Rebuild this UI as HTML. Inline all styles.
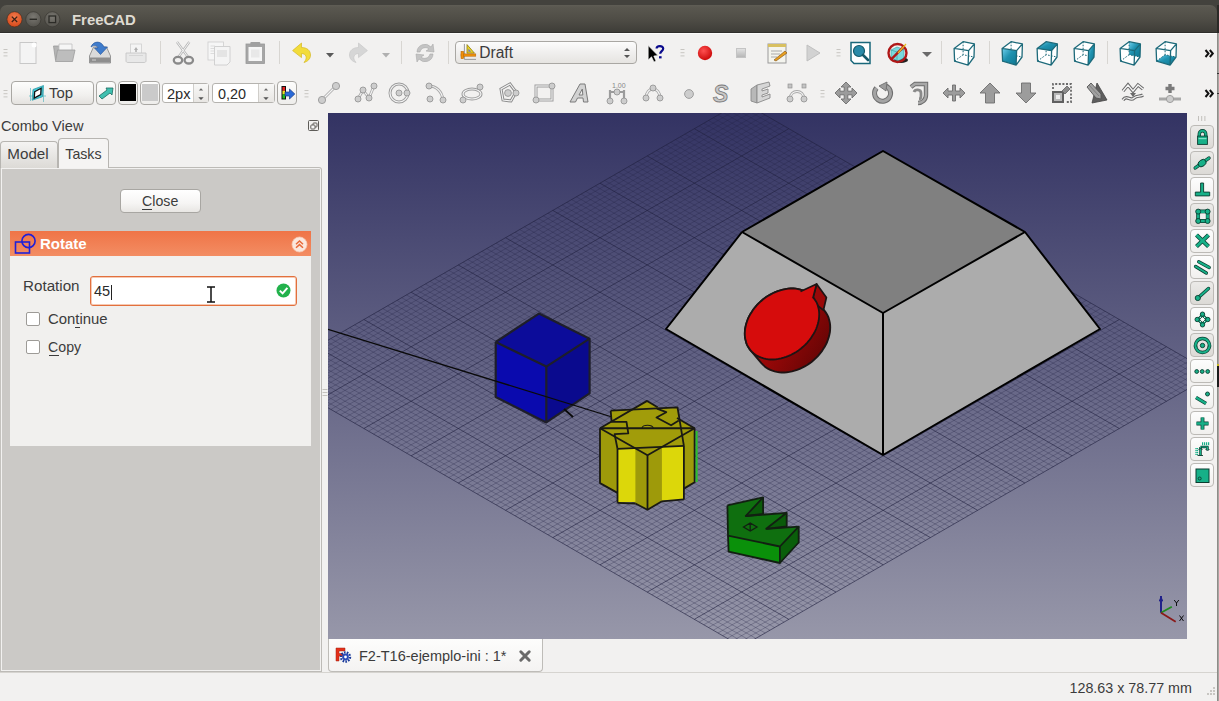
<!DOCTYPE html><html><head><meta charset="utf-8"><style>html,body{margin:0;padding:0;}svg{overflow:visible}body{width:1219px;height:701px;overflow:hidden;position:relative;background:#f2f1f0;font-family:"Liberation Sans", sans-serif;}</style></head><body>
<div style="position:absolute;left:0px;top:0px;width:1219px;height:33px;background:#43423d"></div>
<div style="position:absolute;left:0px;top:5px;width:1217px;height:28px;background:linear-gradient(#5f5d55 0px,#5a5850 2px,#4f4d46 14px,#3e3d38 27px,#2f2e2b 27px);border-radius:7px 7px 0 0"></div>
<div style="position:absolute;left:0px;top:33px;width:1219px;height:1px;background:#fbfbfa"></div>
<svg style="position:absolute;left:5px;top:10px;" width="58" height="20" viewBox="0 0 58 20">
<defs><radialGradient id="cl" cx="50%" cy="35%" r="65%"><stop offset="0" stop-color="#f47a4c"/><stop offset="1" stop-color="#d44a1b"/></radialGradient>
<radialGradient id="gb" cx="50%" cy="35%" r="65%"><stop offset="0" stop-color="#7a7872"/><stop offset="1" stop-color="#55534d"/></radialGradient></defs>
<circle cx="9.5" cy="9.3" r="7.6" fill="url(#cl)" stroke="#3a2a20" stroke-width="0.6"/>
<path d="M6.8 6.6 L12.2 12 M12.2 6.6 L6.8 12" stroke="#3b2116" stroke-width="1.3"/>
<circle cx="28.3" cy="9.3" r="7.6" fill="url(#gb)" stroke="#35342f" stroke-width="0.6"/>
<path d="M24.6 9.3 H32" stroke="#2c2b27" stroke-width="1.4"/>
<circle cx="47.3" cy="9.3" r="7.6" fill="url(#gb)" stroke="#35342f" stroke-width="0.6"/>
<rect x="44" y="6" width="6.6" height="6.6" fill="none" stroke="#2c2b27" stroke-width="1.3"/>
</svg>
<div style="position:absolute;left:72.0px;top:11.8px;font-size:14.9px;font-weight:bold;color:#dfdbd2;line-height:normal;white-space:pre;">FreeCAD</div>
<div style="position:absolute;left:1.0px;top:117.8px;font-size:14.6px;font-weight:normal;color:#3c3c3c;line-height:normal;white-space:pre;">Combo View</div>
<svg style="position:absolute;left:307px;top:119px;" width="12" height="12" viewBox="0 0 12 12"><rect x="1.5" y="1.5" width="10" height="10" rx="1" fill="none" stroke="#5e5c58" stroke-width="1"/><rect x="6" y="4" width="4" height="4" rx="0.8" fill="none" stroke="#5e5c58" stroke-width="1"/><rect x="3.8" y="6" width="4.2" height="4" rx="0.8" fill="#f6f6f6" stroke="#5e5c58" stroke-width="1"/></svg>
<div style="position:absolute;left:0px;top:167px;width:322px;height:505px;border:1px solid #bdbbb7;border-left-color:#c4c2be;box-sizing:border-box;border-radius:0 3px 0 0"></div>
<div style="position:absolute;left:2px;top:169px;width:318px;height:501px;background:#cbc9c6"></div>
<div style="position:absolute;left:0px;top:141px;width:58px;height:27px;background:linear-gradient(#f4f3f2,#dcdad6);border:1px solid #b7b5b1;border-bottom:none;border-radius:4px 4px 0 0;box-sizing:border-box"></div>
<div style="position:absolute;left:58px;top:138px;width:51px;height:30px;background:#f5f4f3;border:1px solid #b7b5b1;border-bottom:none;border-radius:4px 4px 0 0;box-sizing:border-box"></div>
<div style="position:absolute;left:7.3px;top:145.0px;font-size:15.2px;font-weight:normal;color:#3c3c3c;line-height:normal;white-space:pre;">Model</div>
<div style="position:absolute;left:65.3px;top:145.7px;font-size:14.2px;font-weight:normal;color:#3c3c3c;line-height:normal;white-space:pre;">Tasks</div>
<div style="position:absolute;left:120px;top:189px;width:81px;height:24px;background:linear-gradient(#ffffff,#f6f5f4 60%,#e8e6e3);border:1px solid #a8a6a2;border-radius:4px;box-sizing:border-box"></div>
<div style="position:absolute;left:142.0px;top:193.1px;font-size:14.2px;font-weight:normal;color:#3c3c3c;line-height:normal;white-space:pre;">Close</div>
<div style="position:absolute;left:142px;top:209px;width:10px;height:1px;background:#3c3c3c"></div>
<div style="position:absolute;left:10px;top:231px;width:301px;height:25px;background:linear-gradient(#ef7447,#f38d63)"></div>
<svg style="position:absolute;left:13px;top:233px;" width="22" height="22" viewBox="0 0 22 22"><rect x="2.5" y="9" width="14" height="11" fill="none" stroke="#2020d8" stroke-width="1.6"/><circle cx="15.5" cy="8" r="6.6" fill="none" stroke="#2020d8" stroke-width="1.6"/></svg>
<div style="position:absolute;left:40.0px;top:235.4px;font-size:15.0px;font-weight:bold;color:#ffffff;line-height:normal;white-space:pre;">Rotate</div>
<svg style="position:absolute;left:291px;top:236px;" width="17" height="17" viewBox="0 0 17 17"><circle cx="8.5" cy="8.5" r="7.5" fill="#fbe7dd" stroke="#f6c7b0" stroke-width="0.8"/><path d="M5 8.2 L8.5 5 L12 8.2 M5 11.8 L8.5 8.6 L12 11.8" fill="none" stroke="#e86a3a" stroke-width="1.5"/></svg>
<div style="position:absolute;left:10px;top:256px;width:301px;height:190px;background:#f1f0ee"></div>
<div style="position:absolute;left:23.0px;top:277.2px;font-size:15.2px;font-weight:normal;color:#3c3c3c;line-height:normal;white-space:pre;">Rotation</div>
<div style="position:absolute;left:90px;top:276px;width:207px;height:30px;background:#fff;border:1px solid #e2703d;border-radius:3px;box-sizing:border-box;box-shadow:inset 0 0 0 1px #f6c9b3"></div>
<div style="position:absolute;left:94.0px;top:283.4px;font-size:14.5px;font-weight:normal;color:#2a2a2a;line-height:normal;white-space:pre;">45</div>
<div style="position:absolute;left:111px;top:285px;width:1px;height:15px;background:#222"></div>
<svg style="position:absolute;left:205px;top:286px;" width="12" height="18" viewBox="0 0 12 18"><path d="M2 1 H10 M6 1 V16 M2 16 H10" stroke="#111" stroke-width="1.5" fill="none"/></svg>
<svg style="position:absolute;left:275px;top:282px;" width="17" height="17" viewBox="0 0 17 17"><circle cx="8.5" cy="8.5" r="7" fill="#22b24c"/><path d="M4.8 8.6 L7.6 11.4 L12.4 5.8" stroke="#fff" stroke-width="2" fill="none"/></svg>
<div style="position:absolute;left:26px;top:312px;width:14px;height:14px;background:#fff;border:1px solid #9d9b97;border-radius:2px;box-sizing:border-box"></div>
<div style="position:absolute;left:26px;top:340px;width:14px;height:14px;background:#fff;border:1px solid #9d9b97;border-radius:2px;box-sizing:border-box"></div>
<div style="position:absolute;left:48.0px;top:310.5px;font-size:14.9px;font-weight:normal;color:#3c3c3c;line-height:normal;white-space:pre;">Continue</div>
<div style="position:absolute;left:75px;top:327px;width:5px;height:1px;background:#3c3c3c"></div>
<div style="position:absolute;left:48.0px;top:339.1px;font-size:14.2px;font-weight:normal;color:#3c3c3c;line-height:normal;white-space:pre;">Copy</div>
<div style="position:absolute;left:49px;top:355px;width:10px;height:1px;background:#3c3c3c"></div>
<div style="position:absolute;left:322px;top:113px;width:6px;height:558px;background:#f2f1f0"></div>
<svg style="position:absolute;left:322px;top:388px" width="6" height="9"><path d="M0.5 1.5H5.5M0.5 4.5H5.5M0.5 7.5H5.5" stroke="#c4c2be" stroke-width="1"/></svg>
<svg style="position:absolute;left:328px;top:113px;overflow:hidden" width="859" height="526" viewBox="328 113 859 526"><defs><linearGradient id="bg" x1="0" y1="0" x2="0" y2="1"><stop offset="0" stop-color="#333363"/><stop offset="1" stop-color="#9797a9"/></linearGradient><radialGradient id="cyl" cx="20%" cy="20%" r="90%"><stop offset="0" stop-color="#d40c0c"/><stop offset="0.6" stop-color="#a00808"/><stop offset="1" stop-color="#6a0505"/></radialGradient></defs><rect x="328" y="113" width="859" height="526" fill="url(#bg)"/><path d="M274.2 371.3L746.3 643.9M274.2 376.7L746.3 104.1M278.9 368.5L751.0 641.1M278.9 379.5L751.0 106.9M283.7 365.8L755.8 638.4M283.7 382.2L755.8 109.6M288.4 363.1L760.5 635.7M288.4 384.9L760.5 112.3M293.1 360.4L765.2 633.0M293.1 387.6L765.2 115.0M297.8 357.6L769.9 630.2M297.8 390.4L769.9 117.8M302.5 354.9L774.6 627.5M302.5 393.1L774.6 120.5M307.3 352.2L779.4 624.8M307.3 395.8L779.4 123.2M312.0 349.5L784.1 622.1M312.0 398.5L784.1 125.9M321.4 344.0L793.5 616.6M321.4 404.0L793.5 131.4M326.2 341.3L798.3 613.9M326.2 406.7L798.3 134.1M330.9 338.6L803.0 611.2M330.9 409.4L803.0 136.8M335.6 335.8L807.7 608.4M335.6 412.2L807.7 139.6M340.3 333.1L812.4 605.7M340.3 414.9L812.4 142.3M345.0 330.4L817.1 603.0M345.0 417.6L817.1 145.0M349.8 327.7L821.9 600.3M349.8 420.3L821.9 147.7M354.5 324.9L826.6 597.5M354.5 423.1L826.6 150.5M359.2 322.2L831.3 594.8M359.2 425.8L831.3 153.2M368.6 316.8L840.7 589.4M368.6 431.2L840.7 158.6M373.4 314.0L845.5 586.6M373.4 434.0L845.5 161.4M378.1 311.3L850.2 583.9M378.1 436.7L850.2 164.1M382.8 308.6L854.9 581.2M382.8 439.4L854.9 166.8M387.5 305.9L859.6 578.5M387.5 442.1L859.6 169.6M392.2 303.1L864.3 575.7M392.2 444.9L864.3 172.3M397.0 300.4L869.1 573.0M397.0 447.6L869.1 175.0M401.7 297.7L873.8 570.3M401.7 450.3L873.8 177.7M406.4 294.9L878.5 567.5M406.4 453.1L878.5 180.5M415.9 289.5L888.0 562.1M415.9 458.5L888.0 185.9M420.6 286.8L892.7 559.4M420.6 461.2L892.7 188.6M425.3 284.0L897.4 556.6M425.3 464.0L897.4 191.4M430.0 281.3L902.1 553.9M430.0 466.7L902.1 194.1M434.7 278.6L906.8 551.2M434.7 469.4L906.8 196.8M439.5 275.9L911.6 548.5M439.5 472.1L911.6 199.5M444.2 273.1L916.3 545.7M444.2 474.9L916.3 202.3M448.9 270.4L921.0 543.0M448.9 477.6L921.0 205.0M453.6 267.7L925.7 540.3M453.6 480.3L925.7 207.7M463.1 262.2L935.2 534.8M463.1 485.8L935.2 213.2M467.8 259.5L939.9 532.1M467.8 488.5L939.9 215.9M472.5 256.8L944.6 529.4M472.5 491.2L944.6 218.6M477.2 254.1L949.3 526.7M477.2 493.9L949.3 221.3M481.9 251.3L954.0 523.9M481.9 496.7L954.0 224.1M486.7 248.6L958.8 521.2M486.7 499.4L958.8 226.8M491.4 245.9L963.5 518.5M491.4 502.1L963.5 229.5M496.1 243.2L968.2 515.8M496.1 504.8L968.2 232.2M500.8 240.4L972.9 513.0M500.8 507.6L972.9 235.0M510.3 235.0L982.4 507.6M510.3 513.0L982.4 240.4M515.0 232.2L987.1 504.8M515.0 515.8L987.1 243.2M519.7 229.5L991.8 502.1M519.7 518.5L991.8 245.9M524.4 226.8L996.5 499.4M524.4 521.2L996.5 248.6M529.2 224.1L1001.3 496.7M529.2 523.9L1001.3 251.3M533.9 221.3L1006.0 493.9M533.9 526.7L1006.0 254.1M538.6 218.6L1010.7 491.2M538.6 529.4L1010.7 256.8M543.3 215.9L1015.4 488.5M543.3 532.1L1015.4 259.5M548.0 213.2L1020.1 485.8M548.0 534.8L1020.1 262.2M557.5 207.7L1029.6 480.3M557.5 540.3L1029.6 267.7M562.2 205.0L1034.3 477.6M562.2 543.0L1034.3 270.4M566.9 202.3L1039.0 474.9M566.9 545.7L1039.0 273.1M571.6 199.5L1043.7 472.1M571.6 548.5L1043.7 275.9M576.4 196.8L1048.5 469.4M576.4 551.2L1048.5 278.6M581.1 194.1L1053.2 466.7M581.1 553.9L1053.2 281.3M585.8 191.4L1057.9 464.0M585.8 556.6L1057.9 284.0M590.5 188.6L1062.6 461.2M590.5 559.4L1062.6 286.8M595.2 185.9L1067.3 458.5M595.2 562.1L1067.3 289.5M604.7 180.5L1076.8 453.1M604.7 567.5L1076.8 294.9M609.4 177.7L1081.5 450.3M609.4 570.3L1081.5 297.7M614.1 175.0L1086.2 447.6M614.1 573.0L1086.2 300.4M618.9 172.3L1091.0 444.9M618.9 575.7L1091.0 303.1M623.6 169.6L1095.7 442.1M623.6 578.5L1095.7 305.9M628.3 166.8L1100.4 439.4M628.3 581.2L1100.4 308.6M633.0 164.1L1105.1 436.7M633.0 583.9L1105.1 311.3M637.7 161.4L1109.8 434.0M637.7 586.6L1109.8 314.0M642.5 158.6L1114.6 431.2M642.5 589.4L1114.6 316.8M651.9 153.2L1124.0 425.8M651.9 594.8L1124.0 322.2M656.6 150.5L1128.7 423.1M656.6 597.5L1128.7 324.9M661.3 147.7L1133.4 420.3M661.3 600.3L1133.4 327.7M666.1 145.0L1138.2 417.6M666.1 603.0L1138.2 330.4M670.8 142.3L1142.9 414.9M670.8 605.7L1142.9 333.1M675.5 139.6L1147.6 412.2M675.5 608.4L1147.6 335.8M680.2 136.8L1152.3 409.4M680.2 611.2L1152.3 338.6M684.9 134.1L1157.0 406.7M684.9 613.9L1157.0 341.3M689.7 131.4L1161.8 404.0M689.7 616.6L1161.8 344.0M699.1 125.9L1171.2 398.5M699.1 622.1L1171.2 349.5M703.8 123.2L1175.9 395.8M703.8 624.8L1175.9 352.2M708.6 120.5L1180.7 393.1M708.6 627.5L1180.7 354.9M713.3 117.8L1185.4 390.4M713.3 630.2L1185.4 357.6M718.0 115.0L1190.1 387.6M718.0 633.0L1190.1 360.4M722.7 112.3L1194.8 384.9M722.7 635.7L1194.8 363.1M727.4 109.6L1199.5 382.2M727.4 638.4L1199.5 365.8M732.2 106.9L1204.3 379.5M732.2 641.1L1204.3 368.5M736.9 104.1L1209.0 376.7M736.9 643.9L1209.0 371.3" stroke="rgb(38,38,71)" stroke-opacity="0.30" stroke-width="1" fill="none"/><path d="M269.5 374.0L741.6 646.6M269.5 374.0L741.6 101.4M316.7 346.7L788.8 619.3M316.7 401.3L788.8 128.7M363.9 319.5L836.0 592.1M363.9 428.5L836.0 155.9M411.1 292.2L883.2 564.8M411.1 455.8L883.2 183.2M458.3 265.0L930.4 537.6M458.3 483.0L930.4 210.4M505.6 237.7L977.6 510.3M505.6 510.3L977.6 237.7M552.8 210.4L1024.9 483.0M552.8 537.6L1024.9 265.0M600.0 183.2L1072.1 455.8M600.0 564.8L1072.1 292.2M647.2 155.9L1119.3 428.5M647.2 592.1L1119.3 319.5M694.4 128.7L1166.5 401.3M694.4 619.3L1166.5 346.7M741.6 101.4L1213.7 374.0M741.6 646.6L1213.7 374.0" stroke="rgb(33,33,63)" stroke-opacity="0.62" stroke-width="1" fill="none"/><polygon points="538.9,313.6 589.6,338.7 546.3,366.6 495.7,342.0" fill="#0c0c9a" stroke="none" stroke-width="0" stroke-linejoin="round" /><polygon points="495.7,342.0 546.3,366.6 546.3,422.4 495.7,397.0" fill="#0a0aae" stroke="none" stroke-width="0" stroke-linejoin="round" /><polygon points="546.3,366.6 589.6,338.7 589.6,393.3 546.3,422.4" fill="#0a0a8e" stroke="none" stroke-width="0" stroke-linejoin="round" /><polyline points="495.7,342.0 538.9,313.6 589.6,338.7 589.6,393.3 546.3,422.4 495.7,397.0 495.7,342.0" fill="none" stroke="#1e1e2a" stroke-width="2.2" stroke-linejoin="round"/><polyline points="495.7,342.0 546.3,366.6 589.6,338.7" fill="none" stroke="#1e1e2a" stroke-width="2.2" stroke-linejoin="round"/><polyline points="546.3,366.6 546.3,422.4" fill="none" stroke="#1e1e2a" stroke-width="2.2" stroke-linejoin="round"/><path d="M328 329.3 L612 417" stroke="#0a0a0a" stroke-width="1.3"/><path d="M564 409 L573 417" stroke="#0a0a0a" stroke-width="1.8"/><polygon points="883.0,151.0 1025.0,232.0 883.0,313.0 742.0,232.0" fill="#808080" stroke="none" stroke-width="0" stroke-linejoin="round" /><polygon points="742.0,232.0 883.0,313.0 883.0,455.0 666.0,329.0" fill="#acacac" stroke="none" stroke-width="0" stroke-linejoin="round" /><polygon points="883.0,313.0 1025.0,232.0 1100.0,329.0 883.0,455.0" fill="#acacac" stroke="none" stroke-width="0" stroke-linejoin="round" /><polyline points="742.0,232.0 883.0,151.0 1025.0,232.0 1100.0,329.0 883.0,455.0 666.0,329.0 742.0,232.0" fill="none" stroke="#000" stroke-width="2" stroke-linejoin="round"/><polyline points="742.0,232.0 883.0,313.0 1025.0,232.0" fill="none" stroke="#000" stroke-width="2" stroke-linejoin="round"/><polyline points="883.0,313.0 883.0,455.0" fill="none" stroke="#000" stroke-width="2" stroke-linejoin="round"/><defs><linearGradient id="cylg" x1="0" y1="0" x2="1" y2="0.6"><stop offset="0" stop-color="#c00a0a"/><stop offset="0.55" stop-color="#9a0808"/><stop offset="1" stop-color="#6a0505"/></linearGradient></defs><polygon points="744.8,333.8 744.9,331.4 745.1,328.9 745.6,326.5 746.2,324.0 747.0,321.5 747.9,319.0 749.0,316.6 750.3,314.2 751.8,311.9 753.3,309.6 755.1,307.3 756.9,305.2 758.9,303.1 761.0,301.2 763.2,299.3 765.5,297.6 767.8,296.0 770.3,294.6 772.8,293.3 775.3,292.1 777.9,291.1 780.4,290.3 783.0,289.6 785.6,289.1 788.2,288.7 790.8,288.5 793.3,288.5 795.7,288.7 798.1,289.1 800.4,289.6 802.6,290.3 804.7,291.1 806.7,292.1 808.6,293.3 810.3,294.6 811.9,296.1 813.4,297.6 824.4,310.6 825.7,312.4 826.9,314.2 827.9,316.2 828.7,318.2 829.3,320.4 829.8,322.6 830.1,324.9 830.2,327.2 830.1,329.6 829.9,332.1 829.4,334.5 828.8,337.0 828.0,339.5 827.1,342.0 826.0,344.4 824.7,346.8 823.2,349.1 821.7,351.4 819.9,353.7 818.1,355.8 816.1,357.9 814.0,359.8 811.8,361.7 809.5,363.4 807.2,365.0 804.7,366.4 802.2,367.7 799.7,368.9 797.1,369.9 794.6,370.7 792.0,371.4 789.4,371.9 786.8,372.3 784.2,372.5 781.7,372.5 779.3,372.3 776.9,371.9 774.6,371.4 772.4,370.7 770.3,369.9 768.3,368.9 766.4,367.7 764.7,366.4 763.1,364.9 761.6,363.4 750.6,350.4 749.3,348.6 748.1,346.8 747.1,344.8 746.3,342.8 745.7,340.6 745.2,338.4 744.9,336.1" fill="url(#cylg)" stroke="#1e1414" stroke-width="1.9" stroke-linejoin="round" /><polygon points="812.9,298.2 816.6,284.0 826.4,297.5 823.4,310.2 818.0,306.0" fill="#9a0808" stroke="#1e1414" stroke-width="1.7" stroke-linejoin="round" /><polygon points="813.4,297.6 814.7,299.4 815.9,301.2 816.9,303.2 817.7,305.2 818.3,307.4 818.8,309.6 819.1,311.9 819.2,314.2 819.1,316.6 818.9,319.1 818.4,321.5 817.8,324.0 817.0,326.5 816.1,329.0 815.0,331.4 813.7,333.8 812.2,336.1 810.7,338.4 808.9,340.7 807.1,342.8 805.1,344.9 803.0,346.8 800.8,348.7 798.5,350.4 796.2,352.0 793.7,353.4 791.2,354.7 788.7,355.9 786.1,356.9 783.6,357.7 781.0,358.4 778.4,358.9 775.8,359.3 773.2,359.5 770.7,359.5 768.3,359.3 765.9,358.9 763.6,358.4 761.4,357.7 759.3,356.9 757.3,355.9 755.4,354.7 753.7,353.4 752.1,351.9 750.6,350.4 749.3,348.6 748.1,346.8 747.1,344.8 746.3,342.8 745.7,340.6 745.2,338.4 744.9,336.1 744.8,333.8 744.9,331.4 745.1,328.9 745.6,326.5 746.2,324.0 747.0,321.5 747.9,319.0 749.0,316.6 750.3,314.2 751.8,311.9 753.3,309.6 755.1,307.3 756.9,305.2 758.9,303.1 761.0,301.2 763.2,299.3 765.5,297.6 767.8,296.0 770.3,294.6 772.8,293.3 775.3,292.1 777.9,291.1 780.4,290.3 783.0,289.6 785.6,289.1 788.2,288.7 790.8,288.5 793.3,288.5 795.7,288.7 798.1,289.1 800.4,289.6 802.6,290.3 804.7,291.1 806.7,292.1 808.6,293.3 810.3,294.6 811.9,296.1" fill="#d60c0c" stroke="#1e1414" stroke-width="1.8" stroke-linejoin="round" /><polygon points="800.5,291.5 816.6,284.0 812.9,298.2 806.0,296.0" fill="#d60c0c" stroke="none" stroke-width="0" stroke-linejoin="round" /><polyline points="800.5,291.5 816.6,284.0 812.9,298.2" fill="none" stroke="#1e1414" stroke-width="1.7" stroke-linejoin="round"/><polygon points="600.0,428.3 647.5,455.2 647.5,509.7 600.0,483.1" fill="#9e9a0a" stroke="none" stroke-width="0" stroke-linejoin="round" /><polygon points="647.5,455.2 694.6,428.3 694.6,482.3 647.5,509.7" fill="#9e9a0a" stroke="none" stroke-width="0" stroke-linejoin="round" /><polygon points="617.5,448.8 683.9,445.8 683.9,499.4 617.5,502.8" fill="#dcd70a" stroke="none" stroke-width="0" stroke-linejoin="round" /><polygon points="635.4,448.6 647.5,455.2 661.9,447.0 661.9,501.3 647.5,509.7 635.4,503.5" fill="#9e9a0a" stroke="none" stroke-width="0" stroke-linejoin="round" /><polygon points="647.1,400.9 694.6,428.3 647.5,455.2 600.0,428.3" fill="#a19c0a" stroke="none" stroke-width="0" stroke-linejoin="round" /><polygon points="610.7,410.7 677.5,407.3 683.9,445.8 617.5,448.8" fill="#a19c0a" stroke="none" stroke-width="0" stroke-linejoin="round" /><polyline points="600.0,428.3 600.0,483.1 617.5,492.9" fill="none" stroke="#1a1a14" stroke-width="1.8" stroke-linejoin="round"/><polyline points="617.5,448.8 617.5,502.8" fill="none" stroke="#1a1a14" stroke-width="1.8" stroke-linejoin="round"/><polyline points="683.9,445.8 683.9,499.4" fill="none" stroke="#1a1a14" stroke-width="1.8" stroke-linejoin="round"/><polyline points="617.5,502.8 635.4,503.5" fill="none" stroke="#1a1a14" stroke-width="1.8" stroke-linejoin="round"/><polyline points="661.9,501.3 683.9,499.4" fill="none" stroke="#1a1a14" stroke-width="1.8" stroke-linejoin="round"/><polyline points="635.4,503.5 647.5,509.7 661.9,501.3" fill="none" stroke="#1a1a14" stroke-width="1.8" stroke-linejoin="round"/><polyline points="683.9,488.6 694.6,482.3 694.6,428.3" fill="none" stroke="#1a1a14" stroke-width="1.8" stroke-linejoin="round"/><path d="M696.6 431 L696.6 482" stroke="#2cc02c" stroke-width="2"/><polyline points="647.5,455.2 647.5,509.7" fill="none" stroke="#1a1a14" stroke-width="1.8" stroke-linejoin="round"/><polyline points="600.0,428.3 647.5,455.2 694.6,428.3" fill="none" stroke="#1a1a14" stroke-width="1.8" stroke-linejoin="round"/><polyline points="617.5,448.8 683.9,445.8" fill="none" stroke="#1a1a14" stroke-width="1.8" stroke-linejoin="round"/><polyline points="600.0,428.3 694.6,428.3" fill="none" stroke="#1a1a14" stroke-width="2.0" stroke-linejoin="round"/><polyline points="600.0,428.3 647.1,400.9 657.6,407.2" fill="none" stroke="#1a1a14" stroke-width="1.8" stroke-linejoin="round"/><polyline points="677.0,418.0 694.6,428.3" fill="none" stroke="#1a1a14" stroke-width="1.8" stroke-linejoin="round"/><polyline points="610.7,410.7 611.6,421.8 626.5,421.8 628.3,433.4 614.6,434.2 617.5,448.8" fill="none" stroke="#1a1a14" stroke-width="1.8" stroke-linejoin="round"/><polyline points="610.7,410.7 677.5,407.3 683.9,445.8" fill="none" stroke="#1a1a14" stroke-width="1.8" stroke-linejoin="round"/><polyline points="656.9,408.6 666.3,412.2 656.5,417.5 671.1,425.3 678.8,420.5" fill="none" stroke="#1a1a14" stroke-width="1.8" stroke-linejoin="round"/><path d="M642 428.2 A5.6 3 0 0 1 653.2 428.2" fill="none" stroke="#1a1a14" stroke-width="1.1"/><polygon points="728.0,535.6 779.9,546.5 779.9,563.0 728.6,551.6" fill="#0a900a" stroke="none" stroke-width="0" stroke-linejoin="round" /><polygon points="779.9,546.5 798.7,526.7 798.7,542.5 779.9,563.0" fill="#0a5e0a" stroke="none" stroke-width="0" stroke-linejoin="round" /><polygon points="727.4,505.4 763.1,497.4 745.7,516.0 786.7,512.8 766.2,528.8 798.7,526.7 779.9,546.5 728.0,535.6" fill="#0f6f0f" stroke="none" stroke-width="0" stroke-linejoin="round" /><polygon points="763.1,497.4 763.1,514.0 745.7,516.0" fill="#0a5a0a" stroke="none" stroke-width="0" stroke-linejoin="round" /><polygon points="786.7,512.8 786.7,526.5 766.2,528.8" fill="#0a5a0a" stroke="none" stroke-width="0" stroke-linejoin="round" /><polyline points="727.4,505.4 763.1,497.4 763.1,514.0 745.7,516.0 763.1,497.4" fill="none" stroke="#122012" stroke-width="1.8" stroke-linejoin="round"/><polyline points="745.7,516.0 786.7,512.8 786.7,526.5 766.2,528.8 786.7,512.8" fill="none" stroke="#122012" stroke-width="1.8" stroke-linejoin="round"/><polyline points="766.2,528.8 798.7,526.7 779.9,546.5 728.0,535.6 727.4,505.4" fill="none" stroke="#122012" stroke-width="1.8" stroke-linejoin="round"/><polyline points="728.0,535.6 728.6,551.6 779.9,563.0 779.9,546.5" fill="none" stroke="#122012" stroke-width="1.8" stroke-linejoin="round"/><polyline points="779.9,563.0 798.7,542.5 798.7,526.7" fill="none" stroke="#122012" stroke-width="1.8" stroke-linejoin="round"/><path d="M743.5 527 L750.2 523 L757 527 L750.2 531 Z M750.2 523 V531" fill="none" stroke="#122012" stroke-width="1.3"/><path d="M1161 612.7 V596" stroke="#20208a" stroke-width="2"/><path d="M1159.3 601 L1161 597 L1162.7 601 Z" fill="#20208a" stroke="#20208a" stroke-width="1"/><path d="M1161 612.7 L1171.8 606.7" stroke="#208a20" stroke-width="1.8"/><path d="M1161 612.7 L1175.7 621.7" stroke="#8a1a1a" stroke-width="1.8"/><path d="M1174.2 600 L1176.5 603 L1178.8 600 M1176.5 603 V606" stroke="#000" stroke-width="0.9" fill="none"/><path d="M1179.5 615.5 L1183.5 621 M1183.5 615.5 L1179.5 621" stroke="#000" stroke-width="0.9" fill="none"/></svg>
<div style="position:absolute;left:322px;top:639px;width:865px;height:33px;background:#f2f1f0"></div>
<div style="position:absolute;left:328px;top:639px;width:215px;height:33px;background:linear-gradient(#fdfdfc,#f4f3f2);border:1px solid #bebcb8;border-top:none;border-radius:0 0 4px 4px;box-sizing:border-box"></div>
<div style="position:absolute;left:0px;top:672px;width:1217px;height:1px;background:#d6d4d0"></div>
<div style="position:absolute;left:0px;top:673px;width:1217px;height:28px;background:#f2f1f0"></div>
<svg style="position:absolute;left:335px;top:647px;" width="17" height="17" viewBox="0 0 17 17"><path d="M1 1 H10 V4 H4 V6.5 H8 V9 H4 V14 H1 Z" fill="#e4301a" stroke="#a02010" stroke-width="0.5"/><circle cx="10.5" cy="10" r="4.6" fill="none" stroke="#1a3a9a" stroke-width="2.2" stroke-dasharray="1.6 1.2"/><circle cx="10.5" cy="10" r="3.4" fill="#2a4ab8"/><circle cx="10.5" cy="10" r="1.4" fill="#fff"/></svg>
<div style="position:absolute;left:359.0px;top:648.2px;font-size:14.5px;font-weight:normal;color:#3c3c3c;line-height:normal;white-space:pre;">F2-T16-ejemplo-ini : 1*</div>
<svg style="position:absolute;left:518px;top:649px;" width="14" height="14" viewBox="0 0 14 14"><path d="M2.8 2.8 L11.2 11.2 M11.2 2.8 L2.8 11.2" stroke="#6a6a6a" stroke-width="3" stroke-linecap="round"/></svg>
<div style="position:absolute;left:1069.5px;top:679.9px;font-size:14.3px;font-weight:normal;color:#3c3c3c;line-height:normal;white-space:pre;">128.63 x 78.77 mm</div>
<svg style="position:absolute;left:1204px;top:686px;" width="12" height="12" viewBox="0 0 12 12"><g fill="#c8c6c2"><rect x="9" y="1" width="2" height="2"/><rect x="6" y="4" width="2" height="2"/><rect x="9" y="4" width="2" height="2"/><rect x="3" y="7" width="2" height="2"/><rect x="6" y="7" width="2" height="2"/><rect x="9" y="7" width="2" height="2"/></g></svg>
<div style="position:absolute;left:1217px;top:33px;width:1px;height:668px;background:#8e8c88"></div>
<div style="position:absolute;left:1218px;top:33px;width:1px;height:668px;background:#a8a6a2"></div>
<div style="position:absolute;left:1217px;top:364px;width:2px;height:23px;background:#1c1c1c"></div>
<div style="position:absolute;left:1217px;top:364px;width:2px;height:2px;background:#c8b820"></div>
<div style="position:absolute;left:1217px;top:73px;width:2px;height:1px;background:#333"></div>
<div style="position:absolute;left:1217px;top:93px;width:2px;height:1px;background:#333"></div>
<div style="position:absolute;left:1217px;top:5px;width:2px;height:28px;background:#2b2a27"></div>
<svg style="position:absolute;left:3px;top:48.2px" width="5" height="10"><path d="M0.5 1.5H4.5M0.5 4.7H4.5M0.5 7.9H4.5" stroke="#c8c6c2" stroke-width="1"/></svg>
<svg style="position:absolute;left:15.8px;top:40.5px;" width="24" height="24" viewBox="0 0 24 24"><rect x="4" y="1.5" width="16" height="21" fill="#f4f4f4" stroke="#c8c8c8"/><circle cx="18" cy="4" r="2.5" fill="#fff"/></svg>
<svg style="position:absolute;left:52.0px;top:40.5px;" width="24" height="24" viewBox="0 0 24 24"><path d="M1.5 5 H8 L10 7 H19 V19 H3.5 Z" fill="#b4b4b4" stroke="#9a9a9a" stroke-width="0.8"/><path d="M7 3 H20 V14 H7 Z" fill="#f6f6f6" stroke="#c0c0c0" stroke-width="0.8"/><path d="M5.5 9 H23 L20.5 20.5 H3.5 Z" fill="#bdbdbd" stroke="#9c9c9c" stroke-width="0.8"/></svg>
<svg style="position:absolute;left:88.0px;top:40.5px;" width="24" height="24" viewBox="0 0 24 24"><path d="M1.5 15 L5.5 6 H18.5 L22.5 15 V22 H1.5 Z" fill="#dadada" stroke="#8c8c8c" stroke-width="0.9"/><rect x="2" y="16.5" width="20" height="5" fill="#8e8e8e"/><path d="M4 19 H8" stroke="#cfcfcf" stroke-width="1"/><path d="M3 6 C5 0 13 -1 16 6 L19.5 6 L12.5 13.5 L6.5 7 L10 7 C9 4 6 4 3 6 Z" fill="#3f7ccc" stroke="#2a5aa0" stroke-width="0.7"/></svg>
<svg style="position:absolute;left:124.0px;top:40.5px;" width="24" height="24" viewBox="0 0 24 24"><rect x="6.5" y="3" width="11" height="10" fill="#f4f4f4" stroke="#cfcfcf" stroke-width="0.8"/><path d="M10 9 L12 6 L14 9 H12.8 V11 H11.2 V9 Z" fill="#b0b0b0"/><path d="M2 12 H22 V20 C22 21 21 21.5 20 21.5 H4 C3 21.5 2 21 2 20 Z" fill="#e8e8e8" stroke="#c6c6c6" stroke-width="0.9"/><path d="M5 14.5 H19" stroke="#d6d6d6"/></svg>
<div style="position:absolute;left:160px;top:41px;width:1px;height:23px;background:#d8d6d2"></div>
<svg style="position:absolute;left:170.6px;top:40.5px;" width="24" height="24" viewBox="0 0 24 24"><path d="M6 1 L17 16 M18.3 1 L7.5 16" stroke="#b8b8b8" stroke-width="2.4"/><path d="M6 1 L17 16 M18.3 1 L7.5 16" stroke="#f4f4f4" stroke-width="1"/><ellipse cx="7" cy="19.2" rx="4.2" ry="3.3" fill="none" stroke="#8a8a8a" stroke-width="2.3"/><ellipse cx="17.8" cy="19.2" rx="4.2" ry="3.3" fill="none" stroke="#8a8a8a" stroke-width="2.3"/></svg>
<svg style="position:absolute;left:206.6px;top:40.5px;" width="24" height="24" viewBox="0 0 24 24"><rect x="1" y="1" width="15.5" height="18" fill="#f6f6f6" stroke="#d2d2d2" stroke-width="0.9"/><path d="M3.5 5 H8 M3.5 7.5 H8 M3.5 10 H8 M3.5 12.5 H8" stroke="#dcdcdc"/><path d="M7.5 5.5 H23 V21 L20 24 H7.5 Z" fill="#f4f4f4" stroke="#cdcdcd" stroke-width="0.9"/><rect x="10" y="9" width="10" height="7" fill="#e4e4e4"/></svg>
<svg style="position:absolute;left:242.7px;top:40.5px;" width="24" height="24" viewBox="0 0 24 24"><rect x="3" y="3" width="18.5" height="19.5" fill="#a6a6a6" stroke="#989898" stroke-width="0.8"/><rect x="5.5" y="6" width="13.5" height="14" fill="#f6f6f6"/><rect x="8" y="8.5" width="8.5" height="8" fill="#e8e8e8"/><rect x="7.3" y="1" width="10" height="4.2" rx="1" fill="#a0a0a0"/></svg>
<div style="position:absolute;left:278.6px;top:41px;width:1.0px;height:23px;background:#d8d6d2"></div>
<svg style="position:absolute;left:289.0px;top:40.5px;" width="24" height="24" viewBox="0 0 24 24"><path d="M3.6 9.6 L12.5 2 V6.5 C18 6.5 21.5 9.5 21.5 14 C21.5 18 18.5 20.5 15 21.5 C17 19 17.5 17 17 15.5 C16.5 13.5 14.5 12.5 12.5 12.5 V16.6 Z" fill="#f2dc3a" stroke="#d4b820" stroke-width="0.7"/></svg>
<svg style="position:absolute;left:318.0px;top:41.5px;" width="24" height="24" viewBox="0 0 24 24"><path d="M8 11 L16 11 L12 15.5 Z" fill="#5a5a5a"/></svg>
<svg style="position:absolute;left:347.0px;top:40.5px;" width="24" height="24" viewBox="0 0 24 24"><path d="M20.4 9.6 L11.5 2 V6.5 C6 6.5 2.5 9.5 2.5 14 C2.5 18 5.5 20.5 9 21.5 C7 19 6.5 17 7 15.5 C7.5 13.5 9.5 12.5 11.5 12.5 V16.6 Z" fill="#d6d6d6" stroke="#c8c8c8" stroke-width="0.7"/></svg>
<svg style="position:absolute;left:374.0px;top:41.5px;" width="24" height="24" viewBox="0 0 24 24"><path d="M8 11 L16 11 L12 15.5 Z" fill="#b0b0b0"/></svg>
<div style="position:absolute;left:401px;top:41px;width:1px;height:23px;background:#d8d6d2"></div>
<svg style="position:absolute;left:413.0px;top:40.5px;" width="24" height="24" viewBox="0 0 24 24"><path d="M4 11 A8 8 0 0 1 18 6 L20 3 L21 11 L13 10 L16 8 A5.5 5.5 0 0 0 7 11 Z M20 13 A8 8 0 0 1 6 18 L4 21 L3 13 L11 14 L8 16 A5.5 5.5 0 0 0 17 13 Z" fill="#c4c4c4" stroke="#aaa" stroke-width="0.6"/></svg>
<div style="position:absolute;left:448px;top:41px;width:1px;height:23px;background:#d8d6d2"></div>
<div style="position:absolute;left:455px;top:41px;width:182px;height:23px;background:linear-gradient(#fcfcfc,#f0efee 50%,#e6e4e1);border:1px solid #a9a7a3;border-radius:4px;box-sizing:border-box"></div>
<svg style="position:absolute;left:459px;top:43px;" width="20" height="18" viewBox="0 0 20 18"><path d="M5.4 0.9 V16.4 H17" fill="none" stroke="#9a9a9a" stroke-width="1"/><path d="M8 1.6 L8 10.1 L15.4 10.1 Z" fill="#f0d820" stroke="#8a7a10" stroke-width="0.8"/><path d="M9.3 5.5 L9.3 8.8 L12.3 8.8 Z" fill="#7a7ab0"/><rect x="2" y="10.9" width="14.8" height="2.3" fill="#f0900a" stroke="#b06000" stroke-width="0.5"/><rect x="2" y="8.3" width="2.7" height="7.4" fill="#f0900a" stroke="#b06000" stroke-width="0.5"/></svg>
<div style="position:absolute;left:479.2px;top:43.9px;font-size:15.6px;font-weight:normal;color:#3c3c3c;line-height:normal;white-space:pre;">Draft</div>
<svg style="position:absolute;left:622px;top:45px;" width="10" height="16" viewBox="0 0 10 16"><path d="M2 6 L5 3 L8 6 Z M2 10 L5 13 L8 10 Z" fill="#555"/></svg>
<svg style="position:absolute;left:643.7px;top:40.5px;" width="24" height="24" viewBox="0 0 24 24"><path d="M4.2 4.6 V19 L7.5 15.8 L10 21 L12 20 L9.8 15 L14 14.6 Z" fill="#000" stroke="#fff" stroke-width="0.6"/><path d="M12.6 7.5 C12.6 4.5 19.2 4.3 19.2 7.4 C19.2 10 16.2 10.2 16.2 12.8" fill="none" stroke="#0a0a8c" stroke-width="2.2"/><rect x="15" y="15.2" width="2.6" height="2.2" fill="#0a0a8c"/></svg>
<svg style="position:absolute;left:680px;top:48.2px" width="5" height="10"><path d="M0.5 1.5H4.5M0.5 4.7H4.5M0.5 7.9H4.5" stroke="#c8c6c2" stroke-width="1"/></svg>
<svg style="position:absolute;left:692.8px;top:40.5px;" width="24" height="24" viewBox="0 0 24 24"><defs><radialGradient id="rec" cx="40%" cy="35%" r="60%"><stop offset="0" stop-color="#ff5050"/><stop offset="1" stop-color="#d01010"/></radialGradient></defs><circle cx="12" cy="12" r="7.2" fill="url(#rec)"/></svg>
<svg style="position:absolute;left:729.0px;top:40.5px;" width="24" height="24" viewBox="0 0 24 24"><defs><linearGradient id="stp" x1="0" y1="0" x2="0" y2="1"><stop offset="0" stop-color="#e4e4e4"/><stop offset="1" stop-color="#b4b4b4"/></linearGradient></defs><rect x="7.5" y="7.5" width="9" height="9" fill="url(#stp)" stroke="#c4c4c4"/></svg>
<svg style="position:absolute;left:765.0px;top:40.5px;" width="24" height="24" viewBox="0 0 24 24"><rect x="3" y="3" width="18" height="19" fill="#f4f4ee" stroke="#9a9a9a"/><path d="M3 3 H21 V6 H3 Z" fill="#d8c060"/><path d="M6 10 H17 M6 13 H15 M6 16 H12" stroke="#aaa"/><path d="M9 19 L20 10 L22 12 L11 20 Z" fill="#e8a020" stroke="#7a4a10" stroke-width="0.6"/></svg>
<svg style="position:absolute;left:801.0px;top:40.5px;" width="24" height="24" viewBox="0 0 24 24"><path d="M6 4 L19 12 L6 20 Z" fill="#d2d2d2" stroke="#c0c0c0"/></svg>
<svg style="position:absolute;left:836px;top:48.2px" width="5" height="10"><path d="M0.5 1.5H4.5M0.5 4.7H4.5M0.5 7.9H4.5" stroke="#c8c6c2" stroke-width="1"/></svg>
<svg style="position:absolute;left:849.0px;top:40.5px;" width="24" height="24" viewBox="0 0 24 24"><path d="M2 1.5 H21 V22.5 H5 L2 19.5 Z" fill="#fff" stroke="#19677a" stroke-width="1.5"/><circle cx="10" cy="10" r="5.5" fill="#2a8aa8" stroke="#155a6a" stroke-width="1.2"/><path d="M14 14 L19 19" stroke="#155a6a" stroke-width="2.6" stroke-linecap="round"/></svg>
<svg style="position:absolute;left:885.5px;top:40.5px;" width="24" height="24" viewBox="0 0 24 24"><ellipse cx="15" cy="19" rx="7" ry="3" fill="#222"/><path d="M5 9 L11 6 L18 8.5 L18 17 L12 20 L5 17 Z" fill="#7ad8dc" stroke="#3a9aa0" stroke-width="0.6"/><path d="M11 11 L18 8.5 M11 11 L5 9 M11 11 V20" stroke="#3a9aa0" stroke-width="0.6"/><circle cx="11.5" cy="12" r="9" fill="none" stroke="#b01818" stroke-width="2.4"/><path d="M5.2 18.3 L17.8 5.7" stroke="#b01818" stroke-width="2.4"/><path d="M12 12 L20 3" stroke="#e8c020" stroke-width="1.2"/></svg>
<svg style="position:absolute;left:914.5px;top:41.5px;" width="24" height="24" viewBox="0 0 24 24"><path d="M7 10 L17 10 L12 15 Z" fill="#6a6a6a"/></svg>
<div style="position:absolute;left:941px;top:41px;width:1px;height:23px;background:#d8d6d2"></div>
<svg style="position:absolute;left:951.4px;top:39.5px;" width="26" height="27" viewBox="0 0 26 27"><defs><linearGradient id="cg964" x1="0" y1="0" x2="1" y2="1"><stop offset="0" stop-color="#6fd0ee"/><stop offset="0.45" stop-color="#1f92b0"/><stop offset="1" stop-color="#0e7690"/></linearGradient></defs><polygon points="3.1,8.4 17.6,10.7 17.1,25.1 3.6,21.1" fill="#fff"/><polygon points="3.1,8.4 12.1,1.7 23.4,3.9 17.6,10.7" fill="#fff"/><polygon points="17.6,10.7 23.4,3.9 23.0,17.0 17.1,25.1" fill="#fff"/><path d="M12.1 1.7 L12.1 14.7 L23.0 17.0 M12.1 14.7 L3.6 21.1" fill="none" stroke="#1d6a7a" stroke-width="1" stroke-dasharray="1.6 1.4"/><path d="M3.1 8.4 L17.6 10.7 L17.1 25.1 L3.6 21.1 Z M3.1 8.4 L12.1 1.7 L23.4 3.9 L17.6 10.7 M23.4 3.9 L23.0 17.0 L17.1 25.1" fill="none" stroke="#1d6a7a" stroke-width="1.3" stroke-linejoin="round"/></svg>
<div style="position:absolute;left:988.6px;top:41px;width:1.0px;height:23px;background:#d8d6d2"></div>
<svg style="position:absolute;left:998.8px;top:39.5px;" width="26" height="27" viewBox="0 0 26 27"><defs><linearGradient id="cg1011" x1="0" y1="0" x2="1" y2="1"><stop offset="0" stop-color="#6fd0ee"/><stop offset="0.45" stop-color="#1f92b0"/><stop offset="1" stop-color="#0e7690"/></linearGradient></defs><polygon points="3.1,8.4 17.6,10.7 17.1,25.1 3.6,21.1" fill="#fff"/><polygon points="3.1,8.4 12.1,1.7 23.4,3.9 17.6,10.7" fill="#fff"/><polygon points="17.6,10.7 23.4,3.9 23.0,17.0 17.1,25.1" fill="#fff"/><path d="M12.1 1.7 L12.1 14.7 L23.0 17.0 M12.1 14.7 L3.6 21.1" fill="none" stroke="#1d6a7a" stroke-width="1" stroke-dasharray="1.6 1.4"/><polygon points="3.1,8.4 17.6,10.7 17.1,25.1 3.6,21.1" fill="url(#cg1011)"/><path d="M3.1 8.4 L17.6 10.7 L17.1 25.1 L3.6 21.1 Z M3.1 8.4 L12.1 1.7 L23.4 3.9 L17.6 10.7 M23.4 3.9 L23.0 17.0 L17.1 25.1" fill="none" stroke="#1d6a7a" stroke-width="1.3" stroke-linejoin="round"/></svg>
<svg style="position:absolute;left:1034.4px;top:39.5px;" width="26" height="27" viewBox="0 0 26 27"><defs><linearGradient id="cg1047" x1="0" y1="0" x2="1" y2="1"><stop offset="0" stop-color="#6fd0ee"/><stop offset="0.45" stop-color="#1f92b0"/><stop offset="1" stop-color="#0e7690"/></linearGradient></defs><polygon points="3.1,8.4 17.6,10.7 17.1,25.1 3.6,21.1" fill="#fff"/><polygon points="3.1,8.4 12.1,1.7 23.4,3.9 17.6,10.7" fill="#fff"/><polygon points="17.6,10.7 23.4,3.9 23.0,17.0 17.1,25.1" fill="#fff"/><path d="M12.1 1.7 L12.1 14.7 L23.0 17.0 M12.1 14.7 L3.6 21.1" fill="none" stroke="#1d6a7a" stroke-width="1" stroke-dasharray="1.6 1.4"/><polygon points="3.1,8.4 12.1,1.7 23.4,3.9 17.6,10.7" fill="url(#cg1047)"/><path d="M3.1 8.4 L17.6 10.7 L17.1 25.1 L3.6 21.1 Z M3.1 8.4 L12.1 1.7 L23.4 3.9 L17.6 10.7 M23.4 3.9 L23.0 17.0 L17.1 25.1" fill="none" stroke="#1d6a7a" stroke-width="1.3" stroke-linejoin="round"/></svg>
<svg style="position:absolute;left:1070.6px;top:39.5px;" width="26" height="27" viewBox="0 0 26 27"><defs><linearGradient id="cg1083" x1="0" y1="0" x2="1" y2="1"><stop offset="0" stop-color="#6fd0ee"/><stop offset="0.45" stop-color="#1f92b0"/><stop offset="1" stop-color="#0e7690"/></linearGradient></defs><polygon points="3.1,8.4 17.6,10.7 17.1,25.1 3.6,21.1" fill="#fff"/><polygon points="3.1,8.4 12.1,1.7 23.4,3.9 17.6,10.7" fill="#fff"/><polygon points="17.6,10.7 23.4,3.9 23.0,17.0 17.1,25.1" fill="#fff"/><path d="M12.1 1.7 L12.1 14.7 L23.0 17.0 M12.1 14.7 L3.6 21.1" fill="none" stroke="#1d6a7a" stroke-width="1" stroke-dasharray="1.6 1.4"/><polygon points="17.6,10.7 23.4,3.9 23.0,17.0 17.1,25.1" fill="url(#cg1083)"/><path d="M3.1 8.4 L17.6 10.7 L17.1 25.1 L3.6 21.1 Z M3.1 8.4 L12.1 1.7 L23.4 3.9 L17.6 10.7 M23.4 3.9 L23.0 17.0 L17.1 25.1" fill="none" stroke="#1d6a7a" stroke-width="1.3" stroke-linejoin="round"/></svg>
<div style="position:absolute;left:1107.3px;top:41px;width:1.0px;height:23px;background:#d8d6d2"></div>
<svg style="position:absolute;left:1117px;top:39.5px;" width="26" height="27" viewBox="0 0 26 27"><defs><linearGradient id="cg1130" x1="0" y1="0" x2="1" y2="1"><stop offset="0" stop-color="#6fd0ee"/><stop offset="0.45" stop-color="#1f92b0"/><stop offset="1" stop-color="#0e7690"/></linearGradient></defs><polygon points="3.1,8.4 17.6,10.7 17.1,25.1 3.6,21.1" fill="#fff"/><polygon points="3.1,8.4 12.1,1.7 23.4,3.9 17.6,10.7" fill="#fff"/><polygon points="17.6,10.7 23.4,3.9 23.0,17.0 17.1,25.1" fill="#fff"/><polygon points="12.1,1.7 23.4,3.9 23.0,17.0 12.1,14.7" fill="url(#cg1130)"/><path d="M12.1 1.7 L12.1 14.7 L23.0 17.0 M12.1 14.7 L3.6 21.1" fill="none" stroke="#1d6a7a" stroke-width="1" stroke-dasharray="1.6 1.4"/><path d="M3.1 8.4 L17.6 10.7 L17.1 25.1 L3.6 21.1 Z M3.1 8.4 L12.1 1.7 L23.4 3.9 L17.6 10.7 M23.4 3.9 L23.0 17.0 L17.1 25.1" fill="none" stroke="#1d6a7a" stroke-width="1.3" stroke-linejoin="round"/></svg>
<svg style="position:absolute;left:1153.4px;top:39.5px;" width="26" height="27" viewBox="0 0 26 27"><defs><linearGradient id="cg1166" x1="0" y1="0" x2="1" y2="1"><stop offset="0" stop-color="#6fd0ee"/><stop offset="0.45" stop-color="#1f92b0"/><stop offset="1" stop-color="#0e7690"/></linearGradient></defs><polygon points="3.1,8.4 17.6,10.7 17.1,25.1 3.6,21.1" fill="#fff"/><polygon points="3.1,8.4 12.1,1.7 23.4,3.9 17.6,10.7" fill="#fff"/><polygon points="17.6,10.7 23.4,3.9 23.0,17.0 17.1,25.1" fill="#fff"/><polygon points="3.6,21.1 12.1,14.7 23.0,17.0 17.1,25.1" fill="url(#cg1166)"/><path d="M12.1 1.7 L12.1 14.7 L23.0 17.0 M12.1 14.7 L3.6 21.1" fill="none" stroke="#1d6a7a" stroke-width="1" stroke-dasharray="1.6 1.4"/><path d="M3.1 8.4 L17.6 10.7 L17.1 25.1 L3.6 21.1 Z M3.1 8.4 L12.1 1.7 L23.4 3.9 L17.6 10.7 M23.4 3.9 L23.0 17.0 L17.1 25.1" fill="none" stroke="#1d6a7a" stroke-width="1.3" stroke-linejoin="round"/></svg>
<svg style="position:absolute;left:1204px;top:49px;" width="12" height="9" viewBox="0 0 12 9"><path d="M1.5 1 L4.5 4.5 L1.5 8 M5.8 1 L8.8 4.5 L5.8 8" fill="none" stroke="#111" stroke-width="2"/></svg>
<svg style="position:absolute;left:3px;top:88.7px" width="5" height="10"><path d="M0.5 1.5H4.5M0.5 4.7H4.5M0.5 7.9H4.5" stroke="#c8c6c2" stroke-width="1"/></svg>
<div style="position:absolute;left:11px;top:81px;width:83px;height:24px;background:linear-gradient(#fdfdfc,#f1f0ee 60%,#e4e2df);border:1px solid #a9a7a3;border-radius:4px;box-sizing:border-box"></div>
<svg style="position:absolute;left:29px;top:83px;" width="20" height="20" viewBox="0 0 20 20"><path d="M1.5 5 V18 M14.5 2 V19 M0 13 H17" stroke="#5ab8c0" stroke-width="0.7"/><path d="M4 6.5 L14.2 2.7 L13.4 13.8 L3.1 17.2 Z" fill="#44c8d4" stroke="#2a9aa8" stroke-width="0.8"/><path d="M5.7 8.7 L12.1 5.3 L11.7 11.7 L5.2 15.1 Z" fill="#fff" stroke="#111" stroke-width="1.3"/></svg>
<div style="position:absolute;left:49.0px;top:84.8px;font-size:14.9px;font-weight:normal;color:#3c3c3c;line-height:normal;white-space:pre;">Top</div>
<div style="position:absolute;left:96px;top:81px;width:20px;height:24px;background:linear-gradient(#fdfdfc,#eeedeb);border:1px solid #a9a7a3;border-radius:4px;box-sizing:border-box"></div>
<svg style="position:absolute;left:97px;top:85px;" width="18" height="16" viewBox="0 0 18 16"><path d="M2 11 L10 5 L9 3 L16 3 L15 10 L13 8 L5 14 Z" fill="#40c0b0" stroke="#1a6a60" stroke-width="0.8"/></svg>
<div style="position:absolute;left:118px;top:81px;width:20px;height:24px;background:linear-gradient(#fdfdfc,#eeedeb);border:1px solid #a9a7a3;border-radius:4px;box-sizing:border-box"></div>
<div style="position:absolute;left:120px;top:84px;width:16px;height:17px;background:#000"></div>
<div style="position:absolute;left:140px;top:81px;width:20px;height:24px;background:linear-gradient(#fdfdfc,#eeedeb);border:1px solid #a9a7a3;border-radius:4px;box-sizing:border-box"></div>
<div style="position:absolute;left:142px;top:84px;width:16px;height:17px;background:#cacaca"></div>
<div style="position:absolute;left:162px;top:83px;width:47px;height:20px;background:#fff;border:1px solid #b5b3af;border-radius:3px;box-sizing:border-box"></div>
<div style="position:absolute;left:193px;top:84px;width:15px;height:18px;background:linear-gradient(#f8f8f7,#e8e6e3);border-left:1px solid #d0ceca;box-sizing:border-box"></div>
<svg style="position:absolute;left:196px;top:86px;" width="10" height="16" viewBox="0 0 10 16"><path d="M2.8 4.6 L5 2.2 L7.2 4.6 Z" fill="#6a6a6a"/><path d="M2.3 11.2 L5 14 L7.7 11.2 Z" fill="#555"/></svg>
<div style="position:absolute;left:167.0px;top:85.8px;font-size:14.6px;font-weight:normal;color:#2a2a2a;line-height:normal;white-space:pre;">2px</div>
<div style="position:absolute;left:212px;top:83px;width:63px;height:20px;background:#fff;border:1px solid #b5b3af;border-radius:3px;box-sizing:border-box"></div>
<div style="position:absolute;left:258px;top:84px;width:16px;height:18px;background:linear-gradient(#f8f8f7,#e8e6e3);border-left:1px solid #d0ceca;box-sizing:border-box"></div>
<svg style="position:absolute;left:261px;top:86px;" width="10" height="16" viewBox="0 0 10 16"><path d="M2.8 4.6 L5 2.2 L7.2 4.6 Z" fill="#6a6a6a"/><path d="M2.3 11.2 L5 14 L7.7 11.2 Z" fill="#555"/></svg>
<div style="position:absolute;left:218.0px;top:86.0px;font-size:14.4px;font-weight:normal;color:#2a2a2a;line-height:normal;white-space:pre;">0,20</div>
<div style="position:absolute;left:277px;top:81px;width:20px;height:24px;background:linear-gradient(#fdfdfc,#eeedeb);border:1px solid #a9a7a3;border-radius:4px;box-sizing:border-box"></div>
<svg style="position:absolute;left:279px;top:84px;" width="17" height="18" viewBox="0 0 17 18"><rect x="2.5" y="2" width="4.5" height="13.5" fill="#111"/><rect x="3.5" y="3" width="2.5" height="3.8" fill="#e82020"/><rect x="3.5" y="6.8" width="2.5" height="3.6" fill="#f0e020"/><rect x="3.5" y="10.4" width="2.5" height="4.1" fill="#20c020"/><path d="M6 8 H10.5 V5 L15.8 10 L10.5 15 V12 H6 Z" fill="#2a6ad8" stroke="#1a3a80" stroke-width="0.7"/></svg>
<svg style="position:absolute;left:304px;top:88.7px" width="5" height="10"><path d="M0.5 1.5H4.5M0.5 4.7H4.5M0.5 7.9H4.5" stroke="#c8c6c2" stroke-width="1"/></svg>
<svg style="position:absolute;left:317.0px;top:81.0px;" width="24" height="24" viewBox="0 0 24 24"><path d="M5 19 L19 5" fill="none" stroke="#a8a8a8" stroke-width="2.8"/><path d="M5 19 L19 5" fill="none" stroke="#f4f4f4" stroke-width="1.2"/><circle cx="5" cy="19" r="3.6" fill="#cdcdcd" stroke="#979797" stroke-width="0.9"/><circle cx="19" cy="5" r="3.6" fill="#cdcdcd" stroke="#979797" stroke-width="0.9"/></svg>
<svg style="position:absolute;left:353.8px;top:81.0px;" width="24" height="24" viewBox="0 0 24 24"><path d="M4 18 L9 9 L15 17 L20 5" fill="none" stroke="#a8a8a8" stroke-width="2.8"/><path d="M4 18 L9 9 L15 17 L20 5" fill="none" stroke="#f4f4f4" stroke-width="1.2"/><circle cx="4" cy="18" r="3.0" fill="#cdcdcd" stroke="#979797" stroke-width="0.9"/><circle cx="9" cy="9" r="3.0" fill="#cdcdcd" stroke="#979797" stroke-width="0.9"/><circle cx="15" cy="17" r="3.0" fill="#cdcdcd" stroke="#979797" stroke-width="0.9"/><circle cx="20" cy="5" r="3.0" fill="#cdcdcd" stroke="#979797" stroke-width="0.9"/></svg>
<svg style="position:absolute;left:388.0px;top:81.0px;" width="24" height="24" viewBox="0 0 24 24"><circle cx="11" cy="12" r="9" fill="none" stroke="#9c9c9c" stroke-width="3"/><circle cx="11" cy="12" r="9" fill="none" stroke="#f4f4f4" stroke-width="1.2"/><circle cx="11" cy="12" r="3" fill="#cdcdcd" stroke="#979797" stroke-width="0.9"/><circle cx="19" cy="12" r="3" fill="#cdcdcd" stroke="#979797" stroke-width="0.9"/></svg>
<svg style="position:absolute;left:424.0px;top:81.0px;" width="24" height="24" viewBox="0 0 24 24"><path d="M5 5 C12 5 18 10 19 19" fill="none" stroke="#a8a8a8" stroke-width="2.8"/><path d="M5 5 C12 5 18 10 19 19" fill="none" stroke="#f4f4f4" stroke-width="1.2"/><circle cx="5" cy="5" r="3.0" fill="#cdcdcd" stroke="#979797" stroke-width="0.9"/><circle cx="19" cy="19" r="3.0" fill="#cdcdcd" stroke="#979797" stroke-width="0.9"/><circle cx="6" cy="18" r="3.0" fill="#cdcdcd" stroke="#979797" stroke-width="0.9"/></svg>
<svg style="position:absolute;left:460.0px;top:81.0px;" width="24" height="24" viewBox="0 0 24 24"><ellipse cx="12" cy="13" rx="9" ry="5" fill="none" stroke="#9c9c9c" stroke-width="3"/><ellipse cx="12" cy="13" rx="9" ry="5" fill="none" stroke="#f4f4f4" stroke-width="1.2"/><circle cx="20" cy="6" r="3.0" fill="#cdcdcd" stroke="#979797" stroke-width="0.9"/><circle cx="3" cy="19" r="3.0" fill="#cdcdcd" stroke="#979797" stroke-width="0.9"/></svg>
<svg style="position:absolute;left:496.0px;top:81.0px;" width="24" height="24" viewBox="0 0 24 24"><path d="M5 8 L14 3 L20 11 L15 20 L7 19 Z" fill="none" stroke="#8a8a8a" stroke-width="3"/><path d="M5 8 L14 3 L20 11 L15 20 L7 19 Z" fill="none" stroke="#f4f4f4" stroke-width="1.1"/><circle cx="12" cy="12" r="3.4" fill="#cdcdcd" stroke="#979797" stroke-width="0.9"/><circle cx="20" cy="12" r="3" fill="#cdcdcd" stroke="#979797" stroke-width="0.9"/></svg>
<svg style="position:absolute;left:532.0px;top:81.0px;" width="24" height="24" viewBox="0 0 24 24"><rect x="4" y="5" width="16" height="14" fill="none" stroke="#9c9c9c" stroke-width="3"/><rect x="4" y="5" width="16" height="14" fill="none" stroke="#f4f4f4" stroke-width="1.1"/><circle cx="20" cy="5" r="3.0" fill="#cdcdcd" stroke="#979797" stroke-width="0.9"/><circle cx="4" cy="19" r="3.0" fill="#cdcdcd" stroke="#979797" stroke-width="0.9"/></svg>
<svg style="position:absolute;left:568.0px;top:81.0px;" width="24" height="24" viewBox="0 0 24 24"><path d="M2 21 L12 3 L17 3 L20 21 L15.5 21 L15 17 L9.5 17 L7.5 21 Z M11 14 H14.8 L14.3 8 Z" fill="#d2d2d2" stroke="#7a7a7a" stroke-width="1"/></svg>
<svg style="position:absolute;left:604.5px;top:81.0px;" width="24" height="24" viewBox="0 0 24 24"><path d="M5 9 V20 M19 9 V20 M5 11 H19" stroke="#9c9c9c" stroke-width="2.2"/><circle cx="5" cy="20" r="3.0" fill="#cdcdcd" stroke="#979797" stroke-width="0.9"/><circle cx="19" cy="20" r="3.0" fill="#cdcdcd" stroke="#979797" stroke-width="0.9"/><circle cx="12" cy="11" r="3.0" fill="#cdcdcd" stroke="#979797" stroke-width="0.9"/><text x="7" y="7" font-size="7" font-family="Liberation Sans" fill="#888">1.00</text></svg>
<svg style="position:absolute;left:640.6px;top:81.0px;" width="24" height="24" viewBox="0 0 24 24"><path d="M5 17 C5 5 19 5 19 17" fill="none" stroke="#a8a8a8" stroke-width="2.8"/><path d="M5 17 C5 5 19 5 19 17" fill="none" stroke="#f4f4f4" stroke-width="1.2"/><circle cx="5" cy="17" r="3.0" fill="#cdcdcd" stroke="#979797" stroke-width="0.9"/><circle cx="19" cy="17" r="3.0" fill="#cdcdcd" stroke="#979797" stroke-width="0.9"/><circle cx="12" cy="7" r="3.0" fill="#cdcdcd" stroke="#979797" stroke-width="0.9"/></svg>
<svg style="position:absolute;left:676.7px;top:81.0px;" width="24" height="24" viewBox="0 0 24 24"><circle cx="12" cy="13" r="4.4" fill="#cdcdcd" stroke="#979797" stroke-width="0.9"/></svg>
<svg style="position:absolute;left:711.0px;top:81.0px;" width="24" height="24" viewBox="0 0 24 24"><text x="2" y="21" font-size="23" font-style="italic" font-weight="bold" font-family="Liberation Sans" fill="#c8c8c8" stroke="#7a7a7a" stroke-width="0.8">S</text></svg>
<svg style="position:absolute;left:749.0px;top:81.0px;" width="24" height="24" viewBox="0 0 24 24"><path d="M2 8 L8 4 L8 22 L2 20 Z" fill="#b8b8b8" stroke="#8a8a8a" stroke-width="0.9"/><path d="M8 4 L20 1 L21 5 L13 8 L13 10 L19 8 L19 12 L13 14 L13 16 L21 13 L21 17 L8 22 Z" fill="#d6d6d6" stroke="#8a8a8a" stroke-width="0.9"/></svg>
<svg style="position:absolute;left:785.0px;top:81.0px;" width="24" height="24" viewBox="0 0 24 24"><path d="M5 18 C5 8 19 8 19 18" fill="none" stroke="#a8a8a8" stroke-width="2.8"/><path d="M5 18 C5 8 19 8 19 18" fill="none" stroke="#f4f4f4" stroke-width="1.2"/><circle cx="5" cy="18" r="3.0" fill="#cdcdcd" stroke="#979797" stroke-width="0.9"/><circle cx="19" cy="18" r="3.0" fill="#cdcdcd" stroke="#979797" stroke-width="0.9"/><rect x="3" y="3" width="4" height="4" fill="#c4c4c4" stroke="#888" stroke-width="0.6"/><rect x="17" y="3" width="4" height="4" fill="#c4c4c4" stroke="#888" stroke-width="0.6"/></svg>
<svg style="position:absolute;left:820px;top:88.7px" width="5" height="10"><path d="M0.5 1.5H4.5M0.5 4.7H4.5M0.5 7.9H4.5" stroke="#c8c6c2" stroke-width="1"/></svg>
<svg style="position:absolute;left:833.7px;top:81.0px;" width="24" height="24" viewBox="0 0 24 24"><path d="M12 1 L17 6 H13.8 V10.2 H18 V7 L23 12 L18 17 V13.8 H13.8 V18 H17 L12 23 L7 18 H10.2 V13.8 H6 V17 L1 12 L6 7 V10.2 H10.2 V6 H7 Z" fill="#9c9c9c" stroke="#6e6e6e" stroke-width="0.9"/></svg>
<svg style="position:absolute;left:869.5px;top:81.0px;" width="24" height="24" viewBox="0 0 24 24"><path d="M15.5 4.8 A8 8 0 1 1 6.5 7" fill="none" stroke="#6e6e6e" stroke-width="5"/><path d="M15.5 4.8 A8 8 0 1 1 6.5 7" fill="none" stroke="#a4a4a4" stroke-width="3"/><path d="M17 1 L9 5 L16 10 Z" fill="#9c9c9c" stroke="#6e6e6e" stroke-width="0.9"/></svg>
<svg style="position:absolute;left:905.6px;top:81.0px;" width="24" height="24" viewBox="0 0 24 24"><path d="M5 6 L9 3 H20 V14 C20 19 16 22 12 22" fill="none" stroke="#6e6e6e" stroke-width="4.4"/><path d="M5 6 L9 3 H20 V14 C20 19 16 22 12 22" fill="none" stroke="#a8a8a8" stroke-width="2.4"/><path d="M8 11 C9 8 15 8 15 12 V15 C15 17 14 18 13 18" fill="none" stroke="#8a8a8a" stroke-width="2.8"/></svg>
<svg style="position:absolute;left:941.7px;top:81.0px;" width="24" height="24" viewBox="0 0 24 24"><path d="M1 12 L6 7 V10 H10.5 V4 H13.5 V10 H18 V7 L23 12 L18 17 V14 H13.5 V20 H10.5 V14 H6 V17 Z" fill="#9c9c9c" stroke="#6e6e6e" stroke-width="0.9"/></svg>
<svg style="position:absolute;left:977.8px;top:81.0px;" width="24" height="24" viewBox="0 0 24 24"><path d="M12 2 L22 12 H16.5 V22 H7.5 V12 H2 Z" fill="#9c9c9c" stroke="#6e6e6e" stroke-width="0.9"/></svg>
<svg style="position:absolute;left:1013.8px;top:81.0px;" width="24" height="24" viewBox="0 0 24 24"><path d="M12 22 L22 12 H16.5 V2 H7.5 V12 H2 Z" fill="#9c9c9c" stroke="#6e6e6e" stroke-width="0.9"/></svg>
<svg style="position:absolute;left:1050.0px;top:81.0px;" width="24" height="24" viewBox="0 0 24 24"><rect x="3" y="11" width="10" height="10" fill="#b8b8b8" stroke="#606060" stroke-width="2"/><rect x="6" y="14" width="4" height="4" fill="#eee"/><path d="M3 8 V3 H21 V21 H16" fill="none" stroke="#6a6a6a" stroke-width="1.8" stroke-dasharray="2 1.6"/><path d="M12 10 L17 5 L20 8 L15 13 Z" fill="#8a8a8a" stroke="#606060" stroke-width="0.8"/></svg>
<svg style="position:absolute;left:1085.4px;top:81.0px;" width="24" height="24" viewBox="0 0 24 24"><path d="M12 2 L22 19 L7 22 Z" fill="#5e5e5e" stroke="#444" stroke-width="0.8"/><path d="M2 6 L6 2 L16 13 L16 18 L11 17 Z" fill="#a0a0a0" stroke="#555" stroke-width="0.9"/><path d="M4 4 L14 15" stroke="#777" stroke-width="0.8"/></svg>
<svg style="position:absolute;left:1121.4px;top:81.0px;" width="24" height="24" viewBox="0 0 24 24"><path d="M2 10 L7 4 L12 10 L17 4 L22 8 M2 19 C6 13 9 21 13 17 C16 14 19 16 22 14" fill="none" stroke="#6a6a6a" stroke-width="3.4"/><path d="M2 10 L7 4 L12 10 L17 4 L22 8 M2 19 C6 13 9 21 13 17 C16 14 19 16 22 14" fill="none" stroke="#f6f6f6" stroke-width="1.3"/><path d="M9 12 L15 12 L12 16 Z" fill="#6a6a6a"/></svg>
<svg style="position:absolute;left:1157.5px;top:81.0px;" width="24" height="24" viewBox="0 0 24 24"><path d="M12 3 V12 M7.5 7.5 H16.5" stroke="#7a7a7a" stroke-width="3.4"/><path d="M1 18 H23" stroke="#a8a8a8" stroke-width="3"/><circle cx="12" cy="18" r="3.6" fill="#cdcdcd" stroke="#979797" stroke-width="0.9"/></svg>
<svg style="position:absolute;left:1204px;top:89.2px;" width="12" height="9" viewBox="0 0 12 9"><path d="M1.5 1 L4.5 4.5 L1.5 8 M5.8 1 L8.8 4.5 L5.8 8" fill="none" stroke="#111" stroke-width="2"/></svg>
<svg style="position:absolute;left:1197px;top:116px" width="10" height="6"><path d="M1.5 0V5M4.7 0V5M7.9 0V5" stroke="#c2c0bc" stroke-width="1"/></svg>
<div style="position:absolute;left:1190px;top:125px;width:24px;height:24px;background:linear-gradient(#ebeae8,#dcdad6);border:1px solid #bcbab6;border-radius:4px;box-sizing:border-box"></div>
<svg style="position:absolute;left:1190.5px;top:125.5px;" width="23" height="23" viewBox="0 0 23 23"><path d="M8.3 10.5 V8 A3.2 3.2 0 0 1 14.7 8 V10.5" fill="none" stroke="#0b3d30" stroke-width="3.4" stroke-linecap="butt" stroke-linejoin="round"/><path d="M8.3 10.5 V8 A3.2 3.2 0 0 1 14.7 8 V10.5" fill="none" stroke="#17b088" stroke-width="2.0" stroke-linecap="butt" stroke-linejoin="round"/><rect x="6.6" y="10.1" width="9.8" height="8.3" fill="#17b088" stroke="#0b3d30" stroke-width="0.9"/><rect x="7.5" y="12" width="8" height="1.2" fill="#7fe0c4"/></svg>
<div style="position:absolute;left:1190px;top:151px;width:24px;height:24px;background:linear-gradient(#ebeae8,#dcdad6);border:1px solid #bcbab6;border-radius:4px;box-sizing:border-box"></div>
<svg style="position:absolute;left:1190.5px;top:151.5px;" width="23" height="23" viewBox="0 0 23 23"><path d="M4.3 15.9 L17.9 6.1" fill="none" stroke="#0b3d30" stroke-width="3.6" stroke-linecap="round" stroke-linejoin="round"/><path d="M4.3 15.9 L17.9 6.1" fill="none" stroke="#17b088" stroke-width="2.2" stroke-linecap="round" stroke-linejoin="round"/><ellipse cx="11.1" cy="11.1" rx="4.3" ry="3.2" transform="rotate(-36 11.1 11.1)" fill="#17b088" stroke="#0b3d30" stroke-width="0.9"/></svg>
<div style="position:absolute;left:1190px;top:177px;width:24px;height:24px;background:linear-gradient(#fdfdfd,#f1f0ee);border:1px solid #bcbab6;border-radius:4px;box-sizing:border-box"></div>
<svg style="position:absolute;left:1190.5px;top:177.5px;" width="23" height="23" viewBox="0 0 23 23"><path d="M9.6 5 H12.6 V14.1 H18.7 V17.9 H4.3 V14.1 H9.6 Z" fill="#17b088" stroke="#0b3d30" stroke-width="0.9"/></svg>
<div style="position:absolute;left:1190px;top:203px;width:24px;height:24px;background:linear-gradient(#ebeae8,#dcdad6);border:1px solid #bcbab6;border-radius:4px;box-sizing:border-box"></div>
<svg style="position:absolute;left:1190.5px;top:203.5px;" width="23" height="23" viewBox="0 0 23 23"><path d="M7.2 7.6 H16.6 V17 H7.2 Z" fill="none" stroke="#0b3d30" stroke-width="4.0" stroke-linecap="butt" stroke-linejoin="round"/><path d="M7.2 7.6 H16.6 V17 H7.2 Z" fill="none" stroke="#17b088" stroke-width="2.6" stroke-linecap="butt" stroke-linejoin="round"/><circle cx="7.2" cy="7.6" r="2.5" fill="#17b088" stroke="#0b3d30" stroke-width="0.9"/><circle cx="16.6" cy="7.6" r="2.5" fill="#17b088" stroke="#0b3d30" stroke-width="0.9"/><circle cx="7.2" cy="17" r="2.5" fill="#17b088" stroke="#0b3d30" stroke-width="0.9"/><circle cx="16.6" cy="17" r="2.5" fill="#17b088" stroke="#0b3d30" stroke-width="0.9"/><rect x="9.2" y="9.6" width="5.4" height="5.4" fill="#f0f0ee"/></svg>
<div style="position:absolute;left:1190px;top:229px;width:24px;height:24px;background:linear-gradient(#fdfdfd,#f1f0ee);border:1px solid #bcbab6;border-radius:4px;box-sizing:border-box"></div>
<svg style="position:absolute;left:1190.5px;top:229.5px;" width="23" height="23" viewBox="0 0 23 23"><path d="M5.5 5 L17.5 16.5 M17.5 5 L5.5 16.5" fill="none" stroke="#0b3d30" stroke-width="4.199999999999999" stroke-linecap="butt" stroke-linejoin="round"/><path d="M5.5 5 L17.5 16.5 M17.5 5 L5.5 16.5" fill="none" stroke="#17b088" stroke-width="2.8" stroke-linecap="butt" stroke-linejoin="round"/></svg>
<div style="position:absolute;left:1190px;top:255px;width:24px;height:24px;background:linear-gradient(#fdfdfd,#f1f0ee);border:1px solid #bcbab6;border-radius:4px;box-sizing:border-box"></div>
<svg style="position:absolute;left:1190.5px;top:255.5px;" width="23" height="23" viewBox="0 0 23 23"><path d="M7.7 5.8 L18.2 11.5 M4.6 10.5 L15.3 17" fill="none" stroke="#0b3d30" stroke-width="3.4" stroke-linecap="round" stroke-linejoin="round"/><path d="M7.7 5.8 L18.2 11.5 M4.6 10.5 L15.3 17" fill="none" stroke="#17b088" stroke-width="2.0" stroke-linecap="round" stroke-linejoin="round"/></svg>
<div style="position:absolute;left:1190px;top:281px;width:24px;height:24px;background:linear-gradient(#ebeae8,#dcdad6);border:1px solid #bcbab6;border-radius:4px;box-sizing:border-box"></div>
<svg style="position:absolute;left:1190.5px;top:281.5px;" width="23" height="23" viewBox="0 0 23 23"><path d="M8 15 L17.5 6.5" fill="none" stroke="#0b3d30" stroke-width="3.4" stroke-linecap="round" stroke-linejoin="round"/><path d="M8 15 L17.5 6.5" fill="none" stroke="#17b088" stroke-width="2.0" stroke-linecap="round" stroke-linejoin="round"/><circle cx="6.8" cy="16" r="2.6" fill="#17b088" stroke="#0b3d30" stroke-width="0.9"/></svg>
<div style="position:absolute;left:1190px;top:307px;width:24px;height:24px;background:linear-gradient(#fdfdfd,#f1f0ee);border:1px solid #bcbab6;border-radius:4px;box-sizing:border-box"></div>
<svg style="position:absolute;left:1190.5px;top:307.5px;" width="23" height="23" viewBox="0 0 23 23"><path d="M11.5 7 L16 11.5 L11.5 16 L7 11.5 Z" fill="none" stroke="#0b3d30" stroke-width="2.5999999999999996" stroke-linecap="butt" stroke-linejoin="round"/><path d="M11.5 7 L16 11.5 L11.5 16 L7 11.5 Z" fill="none" stroke="#17b088" stroke-width="1.2" stroke-linecap="butt" stroke-linejoin="round"/><circle cx="11.5" cy="6.2" r="2.2" fill="#17b088" stroke="#0b3d30" stroke-width="0.9"/><circle cx="16.8" cy="11.5" r="2.2" fill="#17b088" stroke="#0b3d30" stroke-width="0.9"/><circle cx="11.5" cy="16.8" r="2.2" fill="#17b088" stroke="#0b3d30" stroke-width="0.9"/><circle cx="6.2" cy="11.5" r="2.2" fill="#17b088" stroke="#0b3d30" stroke-width="0.9"/><path d="M9 9 L14 14 M14 9 L9 14" stroke="#fff" stroke-width="0.8"/></svg>
<div style="position:absolute;left:1190px;top:333px;width:24px;height:24px;background:linear-gradient(#ebeae8,#dcdad6);border:1px solid #bcbab6;border-radius:4px;box-sizing:border-box"></div>
<svg style="position:absolute;left:1190.5px;top:333.5px;" width="23" height="23" viewBox="0 0 23 23"><path d="M11.5 4.5 A7 7 0 1 1 11.49 4.5 Z" fill="none" stroke="#0b3d30" stroke-width="3.4" stroke-linecap="butt" stroke-linejoin="round"/><path d="M11.5 4.5 A7 7 0 1 1 11.49 4.5 Z" fill="none" stroke="#17b088" stroke-width="2.0" stroke-linecap="butt" stroke-linejoin="round"/><circle cx="11.5" cy="11.5" r="2.2" fill="#17b088" stroke="#0b3d30" stroke-width="0.9"/></svg>
<div style="position:absolute;left:1190px;top:359px;width:24px;height:24px;background:linear-gradient(#fdfdfd,#f1f0ee);border:1px solid #bcbab6;border-radius:4px;box-sizing:border-box"></div>
<svg style="position:absolute;left:1190.5px;top:359.5px;" width="23" height="23" viewBox="0 0 23 23"><circle cx="5.7" cy="11.5" r="1.9" fill="#17b088" stroke="#0b3d30" stroke-width="0.9"/><circle cx="11.2" cy="11.5" r="1.9" fill="#17b088" stroke="#0b3d30" stroke-width="0.9"/><circle cx="16.7" cy="11.5" r="1.9" fill="#17b088" stroke="#0b3d30" stroke-width="0.9"/></svg>
<div style="position:absolute;left:1190px;top:385px;width:24px;height:24px;background:linear-gradient(#fdfdfd,#f1f0ee);border:1px solid #bcbab6;border-radius:4px;box-sizing:border-box"></div>
<svg style="position:absolute;left:1190.5px;top:385.5px;" width="23" height="23" viewBox="0 0 23 23"><path d="M5 11.5 L15 17.5" fill="none" stroke="#0b3d30" stroke-width="3.6" stroke-linecap="butt" stroke-linejoin="round"/><path d="M5 11.5 L15 17.5" fill="none" stroke="#17b088" stroke-width="2.2" stroke-linecap="butt" stroke-linejoin="round"/><circle cx="16.5" cy="8" r="2.0" fill="#17b088" stroke="#0b3d30" stroke-width="0.9"/></svg>
<div style="position:absolute;left:1190px;top:411px;width:24px;height:24px;background:linear-gradient(#fdfdfd,#f1f0ee);border:1px solid #bcbab6;border-radius:4px;box-sizing:border-box"></div>
<svg style="position:absolute;left:1190.5px;top:411.5px;" width="23" height="23" viewBox="0 0 23 23"><path d="M11.5 5.5 V17.5 M5.5 11.5 H17.5" fill="none" stroke="#0b3d30" stroke-width="3.8" stroke-linecap="butt" stroke-linejoin="round"/><path d="M11.5 5.5 V17.5 M5.5 11.5 H17.5" fill="none" stroke="#17b088" stroke-width="2.4" stroke-linecap="butt" stroke-linejoin="round"/></svg>
<div style="position:absolute;left:1190px;top:437px;width:24px;height:24px;background:linear-gradient(#fdfdfd,#f1f0ee);border:1px solid #bcbab6;border-radius:4px;box-sizing:border-box"></div>
<svg style="position:absolute;left:1190.5px;top:437.5px;" width="23" height="23" viewBox="0 0 23 23"><path d="M9.5 9 H16.5 V12" fill="none" stroke="#0b3d30" stroke-width="2.5" stroke-linecap="butt" stroke-linejoin="round"/><path d="M9.5 9 H16.5 V12" fill="none" stroke="#17b088" stroke-width="1.1" stroke-linecap="butt" stroke-linejoin="round"/><path d="M9.5 9 V17.5" fill="none" stroke="#0b3d30" stroke-width="2.5" stroke-linecap="butt" stroke-linejoin="round"/><path d="M9.5 9 V17.5" fill="none" stroke="#17b088" stroke-width="1.1" stroke-linecap="butt" stroke-linejoin="round"/><path d="M6.5 17.5 H12 M7.5 12 L9.5 10 L11.5 12 M14.5 11 L16.5 13 L18.5 11" stroke="#0b3d30" stroke-width="0.9" fill="none"/><path d="M11 5 H19 M11 6.5 H19" stroke="#17b088" stroke-width="1.3" stroke-dasharray="1.2 0.8"/><path d="M5 10 V17 M6.5 10 V17" stroke="#17b088" stroke-width="1.3" stroke-dasharray="1.2 0.8"/></svg>
<div style="position:absolute;left:1190px;top:463px;width:24px;height:24px;background:linear-gradient(#fdfdfd,#f1f0ee);border:1px solid #bcbab6;border-radius:4px;box-sizing:border-box"></div>
<svg style="position:absolute;left:1190.5px;top:463.5px;" width="23" height="23" viewBox="0 0 23 23"><rect x="5" y="5" width="13" height="13.5" fill="#17b088" stroke="#0b3d30" stroke-width="1"/><circle cx="8.7" cy="14.5" r="1.5" fill="none" stroke="#0b3d30" stroke-width="0.9"/></svg>
</body></html>
